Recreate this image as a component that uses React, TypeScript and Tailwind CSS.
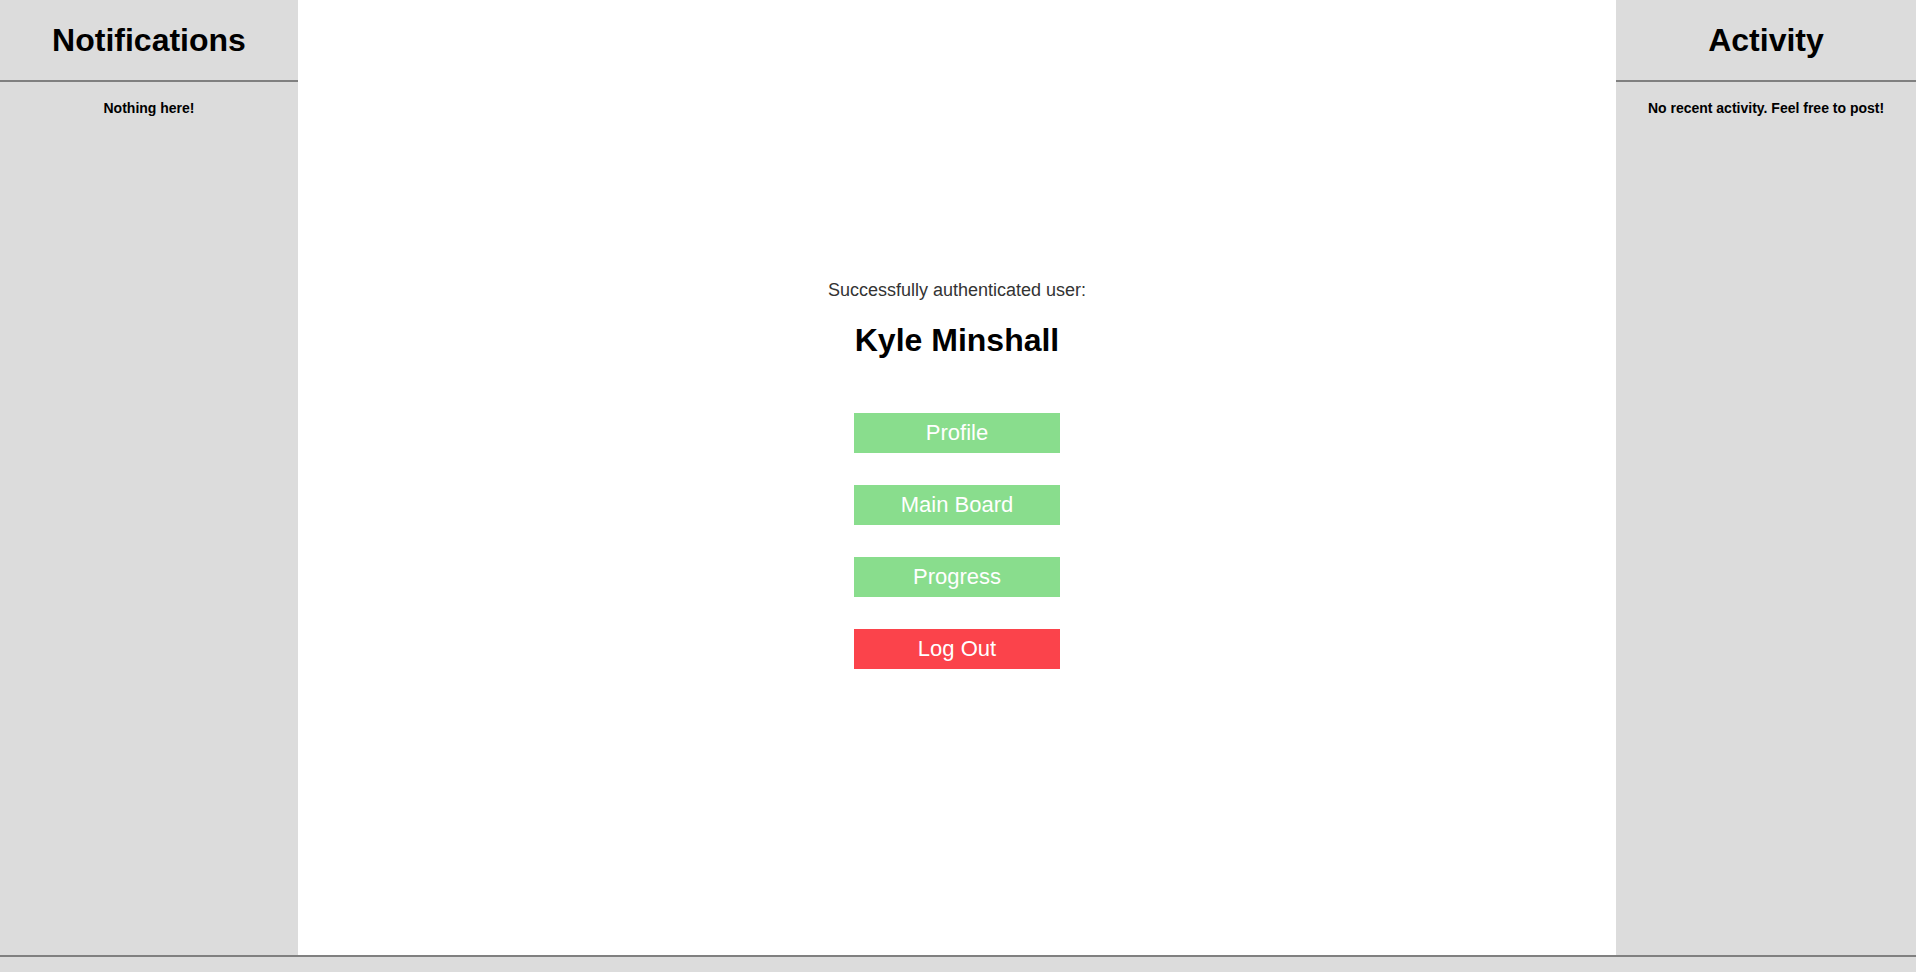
const buttons = [
  { label: 'Profile', color: 'bg-[#89dd8d]' },
  { label: 'Main Board', color: 'bg-[#89dd8d]' },
  { label: 'Progress', color: 'bg-[#89dd8d]' },
  { label: 'Log Out', color: 'bg-[#fb434b]' },
];

function SidePanel({ title, message, width }: { title: string; message: string; width: string }) {
  return (
    <aside className={`${width} shrink-0 bg-[#dcdcdc] flex flex-col`}>
      <div className="h-[82px] border-b-2 border-[#808080] flex items-center justify-center">
        <h2 className="text-[32px] font-bold text-black">{title}</h2>
      </div>
      <p className="pt-[16px] text-center text-[14px] font-bold text-black">{message}</p>
    </aside>
  );
}

export default function App() {
  return (
    <div className="h-[972px] flex flex-col font-['Liberation_Sans',Arial,sans-serif]">
      <div className="flex flex-1">
        <SidePanel title="Notifications" message="Nothing here!" width="w-[298px]" />
        <main className="flex-1 bg-white flex flex-col items-center justify-center pb-[10px]">
          <p className="text-[18px] text-[#333]">Successfully authenticated user:</p>
          <h1 className="mt-[12px] text-[32px] font-bold text-black">Kyle Minshall</h1>
          <div className="mt-[49px] flex flex-col gap-8">
            {buttons.map((b) => (
              <button
                key={b.label}
                className={`${b.color} w-[206px] h-[40px] text-[22px] text-white`}
              >
                {b.label}
              </button>
            ))}
          </div>
        </main>
        <SidePanel
          title="Activity"
          message="No recent activity. Feel free to post!"
          width="w-[300px]"
        />
      </div>
      <footer className="h-[17px] border-t-2 border-[#808080] bg-[#dcdcdc]" />
    </div>
  );
}
